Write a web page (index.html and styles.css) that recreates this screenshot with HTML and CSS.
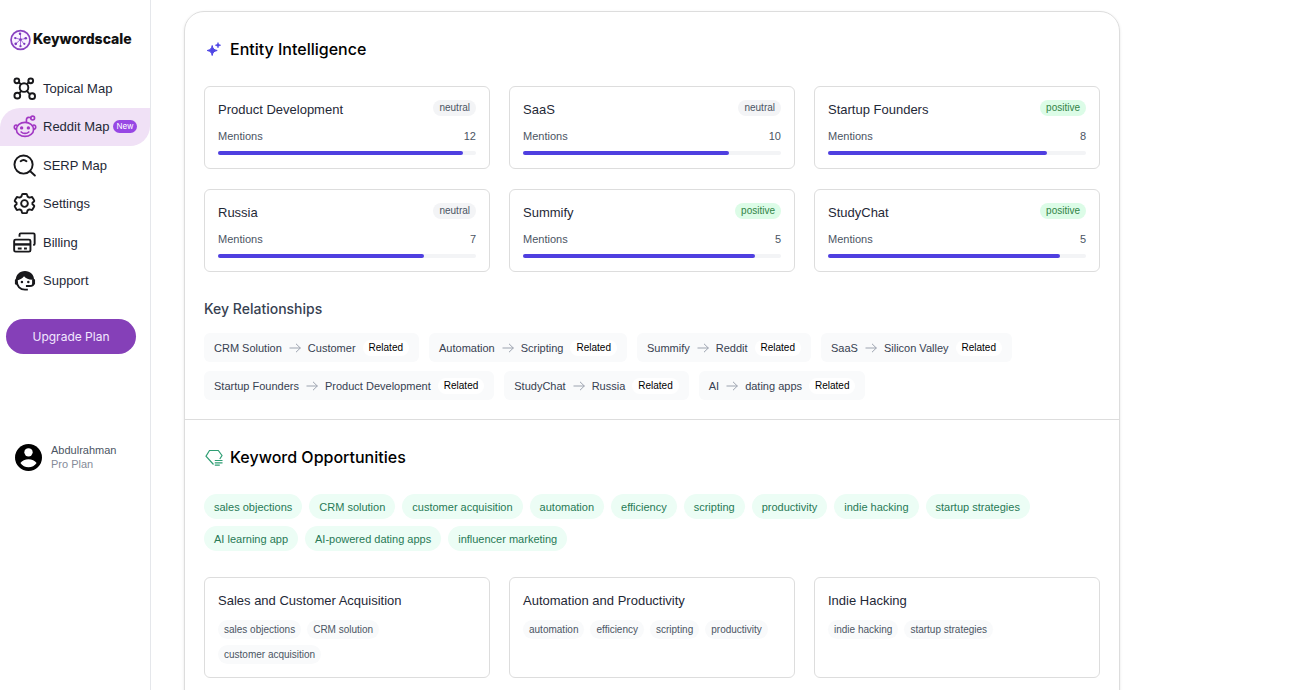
FILE: index.html
```html
<!DOCTYPE html>
<html lang="en">
<head>
<meta charset="utf-8">
<meta name="viewport" content="width=device-width, initial-scale=1">
<title>Keywordscale</title>
<link rel="stylesheet" href="styles.css">
</head>
<body>
<svg class="defs" aria-hidden="true">
  <symbol id="arrow" viewBox="0 0 12 12"><path d="M.5 6h11M7 1.8 11.3 6 7 10.2" fill="none" stroke="currentColor"/></symbol>
</svg>
<div class="app">
  <aside class="sidebar">
    <a class="logo" href="#">
      <svg class="logo-mark" viewBox="0 0 22 22" aria-hidden="true">
        <circle cx="11" cy="11" r="9.900" fill="#faf3ff" stroke="#8a42c0" stroke-width="1.800"/>
        <path d="M11 10.500V4.500M11 10.500l5-1M11 10.500l4 5M11 10.500v7M11 10.500l-5 4.500M11 10.500 6 9" fill="none" stroke="#a56bd8"/>
        <g fill="#7c3abd"><circle cx="11" cy="10.500" r="1.400"/><circle cx="10.500" cy="4.500" r="1.300"/><circle cx="16.500" cy="9.200" r="1.400"/><circle cx="15" cy="15" r="1.200"/><circle cx="11" cy="17.500" r="1.200"/><circle cx="6" cy="15" r="1.400"/><circle cx="5.500" cy="9" r="1.200"/></g>
      </svg>
      <span class="logo-name">Keywordscale</span>
    </a>
    <nav class="nav">
      <a class="nav-item" href="#">
        <svg class="nav-icon" viewBox="0 0 24 24" fill="none" stroke="currentColor" stroke-width="2" aria-hidden="true"><circle cx="11.500" cy="11" r="4.500"/><circle cx="4" cy="4" r="2.500"/><circle cx="18.500" cy="4" r="2.500"/><circle cx="4.500" cy="19.500" r="3"/><circle cx="20" cy="20" r="3"/><path d="m6 5.500 2.500 2.300M16.500 5.500l-2 2M6.500 17l2.200-2.500M17.500 18l-3-3.500"/></svg>
        Topical Map
      </a>
      <a class="nav-item nav-item-active" href="#" aria-current="page">
        <svg class="nav-icon reddit" viewBox="0 0 24 24" fill="none" stroke="currentColor" stroke-width="1.700" stroke-linecap="round" aria-hidden="true"><ellipse cx="12" cy="15" rx="9" ry="7.300"/><path d="M4.200 11.300C2.500 9.500.8 11 .8 12.500c0 1.300 1 2.300 2.200 2.500M19.800 11.300c1.700-1.800 3.400-.3 3.400 1.200 0 1.300-1 2.300-2.200 2.500M13.500 7.500V5c0-1.500.8-2.500 2.200-2.500.8 0 1.500.200 2.300.3M8 17.700c2 2 6 2 8 0"/><circle cx="20" cy="3.200" r="2"/><circle cx="8.500" cy="13.500" r=".9" fill="currentColor"/><circle cx="15.500" cy="13.500" r=".9" fill="currentColor"/></svg>
        Reddit Map <span class="new">New</span>
      </a>
      <a class="nav-item" href="#">
        <svg class="nav-icon" viewBox="0 0 24 24" fill="none" stroke="currentColor" stroke-width="2" stroke-linecap="round" aria-hidden="true"><circle cx="11" cy="11" r="9.500"/><path d="m18 18 4.800 4.500M8 7.500c1.800-1.600 4.200-1.600 6 0"/></svg>
        SERP Map
      </a>
      <a class="nav-item" href="#">
        <svg class="nav-icon" viewBox="0 0 24 24" fill="none" stroke="currentColor" stroke-width="2" stroke-linejoin="round" aria-hidden="true"><circle cx="12" cy="12" r="3.500"/><path d="M10.200 2h3.600c.5 0 .8.300.9.800l.5 2 1.900 1.100 2.100-.6c.5-.1.900 0 1.100.4l1.700 3c.3.400.2.900-.1 1.200L20.300 11.200v1.600l1.600 1.300c.3.300.4.800.1 1.200l-1.700 3c-.2.400-.6.500-1.100.4l-2.100-.6-1.900 1.100-.5 2c-.1.500-.4.800-.9.800h-3.600c-.5 0-.8-.3-.9-.8l-.5-2-1.900-1.100-2.100.6c-.5.100-.9 0-1.100-.4l-1.700-3c-.3-.4-.2-.9.100-1.200l1.600-1.300v-1.600L2.100 9.900c-.3-.3-.4-.8-.1-1.200l1.700-3c.2-.4.600-.5 1.100-.4l2.100.6 1.900-1.100.5-2c.1-.5.4-.8.900-.8z"/></svg>
        Settings
      </a>
      <a class="nav-item" href="#">
        <svg class="nav-icon" viewBox="0 0 24 24" fill="none" stroke="currentColor" stroke-width="2" stroke-linejoin="round" aria-hidden="true"><rect x="1.200" y="9" width="17" height="12.500" rx="1.500"/><path d="M1.200 14h17" stroke-width="2.500"/><path d="M5 18.200h4M11.500 18.200h3M6.800 6V3.800c0-.8.500-1.300 1.300-1.300h13.200c.8 0 1.300.5 1.300 1.300v9.400c0 .8-.5 1.300-1.300 1.300H21"/></svg>
        Billing
      </a>
      <a class="nav-item" href="#">
        <svg class="nav-icon" viewBox="0 0 24 24" aria-hidden="true"><path d="M4 13c0 5 3.500 8.500 8.500 8.500h3M21.500 11v3c0 2.500-1.500 3.800-4 3.800h-4" fill="none" stroke="currentColor" stroke-width="2"/><path d="M3 12C2.500 6 7 2 12.500 2c5.500 0 9.500 4 9.500 9-5 .500-8.300-1-10.500-3.500-1.500 2.500-4.500 4-8.500 4.500z" fill="currentColor"/><rect x="2" y="10.500" width="3" height="6" rx="1.500" fill="currentColor"/><rect x="20" y="10.500" width="3" height="6" rx="1.500" fill="currentColor"/><circle cx="9.300" cy="13.500" r="1.300" fill="currentColor"/><circle cx="16" cy="13.500" r="1.300" fill="currentColor"/></svg>
        Support
      </a>
    </nav>
    <button class="upgrade" type="button">Upgrade Plan</button>
    <div class="profile">
      <svg class="avatar" viewBox="0 0 26 26" aria-hidden="true"><circle cx="13" cy="13" r="13"/><circle cx="13" cy="8" r="4" fill="#fff"/><path d="M5.200 18.300c1.500-2.300 4.700-3.600 7.800-3.600s6.300 1.300 7.800 3.600a9.400 9.400 0 0 1-15.600 0z" fill="#fff"/></svg>
      <div><div class="profile-name">Abdulrahman</div><div class="profile-plan">Pro Plan</div></div>
    </div>
  </aside>
  <main class="content">
    <div class="panel">
      <section class="section">
        <h2 class="title">
          <svg class="title-icon" viewBox="0 0 18 18" fill="#4f46e5" aria-hidden="true"><path d="M7.200 4.500c.8 3.400 1.600 4.200 5 5-3.400.8-4.200 1.600-5 5-.8-3.400-1.600-4.200-5-5 3.400-.8 4.200-1.600 5-5z" stroke="#4f46e5"/><path d="M13 1.500c.5 1.800.9 2.200 2.700 2.700-1.800.5-2.200.9-2.700 2.700-.5-1.800-.9-2.200-2.700-2.700 1.800-.5 2.200-.9 2.700-2.700z" stroke="#4f46e5" stroke-width=".6"/></svg>
          Entity Intelligence
        </h2>
        <div class="grid">
          <article class="card"><div class="card-head"><h3>Product Development</h3><span class="badge">neutral</span></div><div class="mentions"><span>Mentions</span><span>12</span></div><div class="bar"><div class="fill" style="width:95%"></div></div></article>
          <article class="card"><div class="card-head"><h3>SaaS</h3><span class="badge">neutral</span></div><div class="mentions"><span>Mentions</span><span>10</span></div><div class="bar"><div class="fill" style="width:80%"></div></div></article>
          <article class="card"><div class="card-head"><h3>Startup Founders</h3><span class="badge positive">positive</span></div><div class="mentions"><span>Mentions</span><span>8</span></div><div class="bar"><div class="fill" style="width:85%"></div></div></article>
          <article class="card"><div class="card-head"><h3>Russia</h3><span class="badge">neutral</span></div><div class="mentions"><span>Mentions</span><span>7</span></div><div class="bar"><div class="fill" style="width:80%"></div></div></article>
          <article class="card"><div class="card-head"><h3>Summify</h3><span class="badge positive">positive</span></div><div class="mentions"><span>Mentions</span><span>5</span></div><div class="bar"><div class="fill" style="width:90%"></div></div></article>
          <article class="card"><div class="card-head"><h3>StudyChat</h3><span class="badge positive">positive</span></div><div class="mentions"><span>Mentions</span><span>5</span></div><div class="bar"><div class="fill" style="width:90%"></div></div></article>
        </div>
        <h3 class="subtitle">Key Relationships</h3>
        <div class="relations">
          <div class="relation">CRM Solution<svg class="arrow"><use href="#arrow"/></svg>Customer<span class="related">Related</span></div>
          <div class="relation">Automation<svg class="arrow"><use href="#arrow"/></svg>Scripting<span class="related">Related</span></div>
          <div class="relation">Summify<svg class="arrow"><use href="#arrow"/></svg>Reddit<span class="related">Related</span></div>
          <div class="relation">SaaS<svg class="arrow"><use href="#arrow"/></svg>Silicon Valley<span class="related">Related</span></div>
          <div class="relation">Startup Founders<svg class="arrow"><use href="#arrow"/></svg>Product Development<span class="related">Related</span></div>
          <div class="relation">StudyChat<svg class="arrow"><use href="#arrow"/></svg>Russia<span class="related">Related</span></div>
          <div class="relation">AI<svg class="arrow"><use href="#arrow"/></svg>dating apps<span class="related">Related</span></div>
        </div>
      </section>
      <section class="section">
        <h2 class="title">
          <svg class="title-icon" viewBox="0 0 18 18" fill="none" stroke="#2f9e74" stroke-width="1.200" aria-hidden="true"><path d="M8.500 15.500 1 7.200 4.500 1.500h8.800L17 6.500 14.800 10M9.800 11.500h7.700M9.800 13.800h7.700M9.800 16.200h5"/></svg>
          Keyword Opportunities
        </h2>
        <div class="tags">
          <span class="tag">sales objections</span><span class="tag">CRM solution</span><span class="tag">customer acquisition</span><span class="tag">automation</span><span class="tag">efficiency</span><span class="tag">scripting</span><span class="tag">productivity</span><span class="tag">indie hacking</span><span class="tag">startup strategies</span><span class="tag">AI learning app</span><span class="tag">AI-powered dating apps</span><span class="tag">influencer marketing</span>
        </div>
        <div class="grid">
          <article class="card"><h3>Sales and Customer Acquisition</h3><div class="chips"><span class="chip">sales objections</span><span class="chip">CRM solution</span><span class="chip">customer acquisition</span></div></article>
          <article class="card"><h3>Automation and Productivity</h3><div class="chips"><span class="chip">automation</span><span class="chip">efficiency</span><span class="chip">scripting</span><span class="chip">productivity</span></div></article>
          <article class="card"><h3>Indie Hacking</h3><div class="chips"><span class="chip">indie hacking</span><span class="chip">startup strategies</span></div></article>
        </div>
      </section>
    </div>
  </main>
</div>
</body>
</html>
```
FILE: styles.css
```css
* { box-sizing: border-box; }
body { margin: 0; background: #fff; color: #1f2937; font-family: "Liberation Sans", Arial, sans-serif; font-size: 13px; }
h2, h3 { margin: 0; font-weight: 400; }
a { color: inherit; text-decoration: none; }
.defs { display: none; }
.app { display: flex; align-items: stretch; min-height: 100vh; }

.sidebar { flex: 0 0 151px; border-right: 1px solid #e5e7eb; padding-top: 28px; }
.logo { display: flex; align-items: center; gap: 2px; height: 24px; padding-left: 10px; color: #111; font: 800 14px/20px Inter, sans-serif; }
.logo-mark { flex: none; width: 21px; height: 22px; }
.logo-name { padding-bottom: 2px; }
.nav { display: grid; grid-auto-rows: 1fr; height: 231px; margin-top: 17px; }
.nav-item { display: flex; align-items: center; gap: 7px; padding-left: 13px; white-space: nowrap; }
.nav-item-active { background: #f0e1f6; border-radius: 20px 0 20px 0; }
.nav-icon { flex: none; width: 23px; height: 23px; color: #18181b; }
.reddit { width: 24px; color: #a238c4; margin-right: -1px; }
.new { margin-left: -3px; padding: 0 3px; border-radius: 7px; background: #9747e4; color: #fff; font: 8px/13px Inter, sans-serif; }
.upgrade { display: block; width: 130px; height: 35px; margin: 19px 0 0 6px; border: 0; border-radius: 18px; background: #8540b8; color: #f3e8ff; font: 400 12px Inter, sans-serif; }
.profile { display: flex; align-items: center; gap: 9px; margin-top: 89px; padding-left: 15px; font-size: 11px; line-height: 14px; }
.avatar { width: 27px; height: 27px; }
.profile-name { color: #4b5563; }
.profile-plan { color: #858b99; }

.content { flex: 1; min-width: 0; padding: 11px 33px 20px; }
.panel { max-width: 936px; border: 1px solid #ddd; border-radius: 20px; box-shadow: 0 1px 3px rgba(0, 0, 0, .1); }
.section { padding: 25px 19px 19px; }
.section + .section { border-top: 1px solid #ddd; padding-bottom: 40px; }
.title { display: flex; align-items: center; gap: 7px; margin-bottom: 24px; padding-left: 1px; color: #000; font: 500 16px/25px Inter, sans-serif; }
.title-icon { width: 18px; height: 18px; }
.grid { display: grid; grid-template-columns: repeat(3, minmax(0, 1fr)); gap: 20px 19px; }
.card { padding: 13px; border: 1px solid #ddd; border-radius: 6px; }
.card h3 { font-size: 13px; line-height: 20px; }
.card-head { display: flex; justify-content: space-between; align-items: flex-start; }
.badge { padding: 0 6px; border-radius: 8px; background: #f3f4f6; color: #4b5563; font-size: 10px; line-height: 16px; }
.positive { background: #dcfce7; color: #318345; }
.mentions { display: flex; justify-content: space-between; margin: 10px 0 8px; color: #4b5563; font-size: 11px; line-height: 13px; }
.bar { height: 4px; border-radius: 2px; background: #f3f4f6; }
.fill { height: 100%; border-radius: 2px; background: #4f3fe0; }
.subtitle { margin: 25px 0 12px; color: #374151; font: 500 14px/24px Inter, sans-serif; }
.relations { display: flex; flex-wrap: wrap; gap: 9px 10px; }
.relation { display: flex; align-items: center; height: 29px; padding: 0 10px; border-radius: 6px; background: #f9fafb; color: #374151; font-size: 11px; }
.arrow { width: 12px; height: 12px; margin: 0 7px; color: #9ca3af; }
.related { margin-left: 7px; padding: 0 6px; border-radius: 8px; background: #fff; color: #000; font-size: 10px; line-height: 16px; }
.tags { display: flex; flex-wrap: wrap; gap: 7px; margin-bottom: 26px; }
.tag { padding: 1px 10px 0; border-radius: 13px; background: #ecfdf5; color: #287a56; font-size: 11px; line-height: 24px; }
.chips { display: flex; flex-wrap: wrap; gap: 6px; margin-top: 9px; }
.chip { padding: 0 6px; border-radius: 10px; background: #f9fafb; color: #4b5563; font-size: 10px; line-height: 19px; }
```
